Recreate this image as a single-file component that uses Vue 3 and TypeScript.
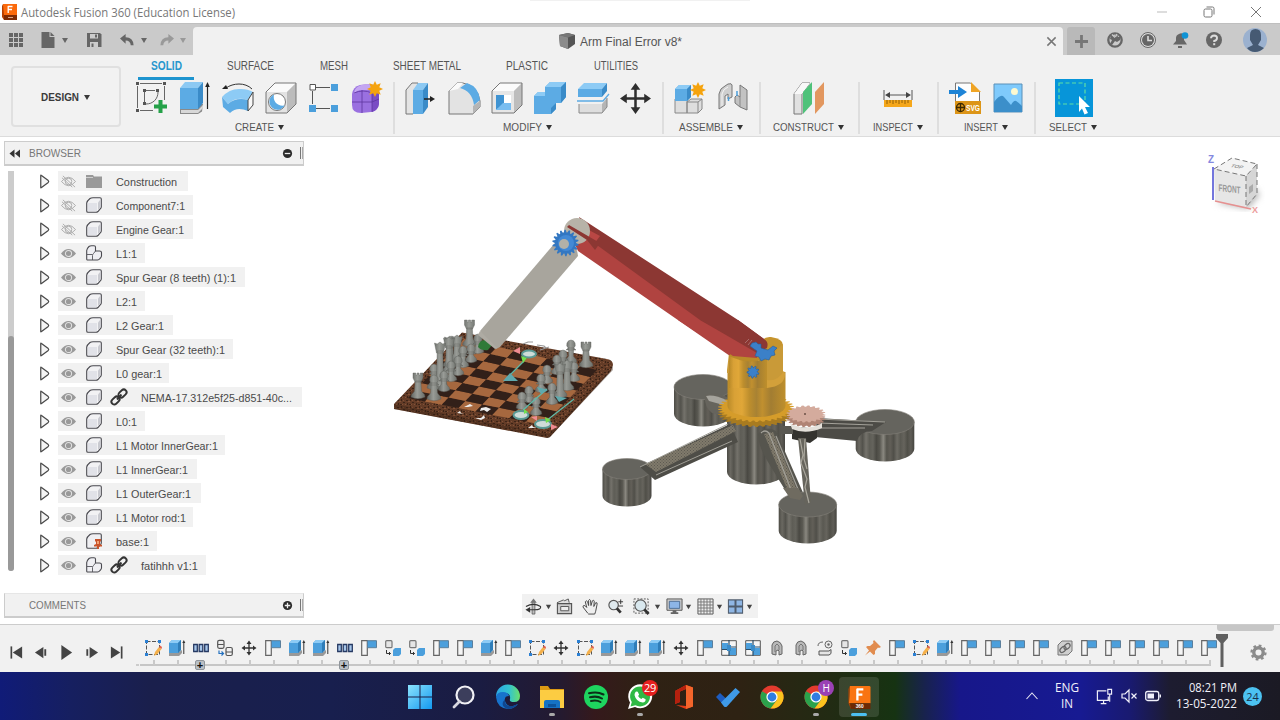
<script setup lang="ts">
import { h } from 'vue'

interface TxtProps { t: string; w: number; s?: number; b?: boolean; f?: string }
const Txt = (p: TxtProps) => {
  const s = Number(p.s ?? 12)
  return h('svg', { width: p.w, height: Math.round(s * 1.4), style: { overflow: 'visible', flex: 'none', display: 'block' } }, [
    h('text', {
      x: 0, y: s * 1.06, textLength: p.w, lengthAdjust: 'spacingAndGlyphs', fill: 'currentColor',
      'font-size': s, 'font-weight': p.b ? 700 : 400, 'font-family': p.f ?? '"Liberation Sans", Arial, sans-serif'
    }, p.t)
  ])
}
Txt.props = { t: String, w: Number, s: Number, b: Boolean, f: String }

const box = (x: number, y: number, w: number, d: number, hh: number, front: string, top: string, side: string, stroke: string) =>
  `<path d="M${x} ${y + d}l${d} ${-d}h${w}v${hh}l${-d} ${d}h${-w}z" fill="${front}"/><path d="M${x} ${y + d}l${d} ${-d}h${w}l${-d} ${d}z" fill="${top}"/><path d="M${x + w} ${y + d}l${d} ${-d}v${hh}l${-d} ${d}z" fill="${side}"/><path d="M${x} ${y + d}l${d} ${-d}h${w}v${hh}l${-d} ${d}h${-w}z" fill="none" stroke="${stroke}" stroke-width="1"/>`
const star = (cx: number, cy: number, r: number) => {
  let d = ''
  for (let i = 0; i < 16; i++) {
    const q = i % 2 ? r * 0.58 : r
    const a = (i * Math.PI) / 8 - Math.PI / 2
    d += `${i ? 'L' : 'M'}${(cx + q * Math.cos(a)).toFixed(1)} ${(cy + q * Math.sin(a)).toFixed(1)}`
  }
  return `<path d="${d}z" fill="#f5a30d"/>`
}
const chrome = '<circle cx="12" cy="12" r="11.5" fill="#e33b2e"/><path d="M12 12L2 6.2A11.5 11.5 0 0 0 10.6 23.4L17 15z" fill="#2ba24c"/><path d="M12 6.4h10a11.5 11.5 0 0 1-11.4 17L17 15z" fill="#fcc31e"/><circle cx="12" cy="12" r="5.6" fill="#fff"/><circle cx="12" cy="12" r="4.4" fill="#2f7de1"/>'

const icons: Record<string, [number, string]> = {
  sketch: [32, '<g fill="none" stroke="#666" stroke-width="1"><path d="M4 1.5h22M1.500 4v22M28.500 4v14M4 28.500h13M9 8.500h10M8.500 10v11M22 10c0 7-5 12-12 12"/></g><g fill="#555"><path d="M0 0h3v3H0zM27 0h3v3h-3zM0 27h3v3H0zM7 7h3v3H7zM20 7h3v3h-3zM7 20h3v3H7z"/></g><path d="M22.500 18h4v4.500H31v4h-4.500V31h-4v-4.500H18v-4h4.500z" fill="#24a148"/>'],
  extrude: [32, '<path d="M1 27l5-5h18l-1 7.500-4 2.500H1z" fill="#8a8a8a"/><path d="M2 28h17l5-5v3l-5 5H2z" fill="#d8d8d8"/><path d="M1 6l5-6h18l-5 6z" fill="#8cc9f3"/><path d="M1 6h18v21H1z" fill="#5cabe4"/><path d="M19 6l5-6v21l-5 6z" fill="#3a8bc8"/><path d="M28.500 27V3" stroke="#222" stroke-width="1.200"/><path d="M28.500 0l2.300 5h-4.600z" fill="#222"/>'],
  revolve: [32, '<path d="M4 6C11 1 23 0 30 7" fill="none" stroke="#333" stroke-width="1"/><path d="M0 7l4-4 2 4z" fill="#222"/><path d="M0 15Q8 6 19 7q7 0 12 3l-5 8Q14 14 6 22z" fill="#8dcbf5"/><path d="M0 15l6 7Q14 15 26 18v11Q15 24 8 31L1 25z" fill="#5cabe4"/><path d="M26 18l5-8v13l-5 6z" fill="#f8f8f8" stroke="#444"/>'],
  hole: [32, box(1, 1, 21, 9, 21, '#e3e3e3', '#fafafa', '#bcbcbc', '#777') + '<circle cx="12" cy="20" r="8.500" fill="#fff" stroke="#777"/><path d="M9 12.500a8 8 0 1 0 10.500 11c-7 1-12-4-10.500-11z" fill="#5cabe4"/>'],
  rectpat: [32, '<path d="M8 5.500h14M4.500 9v13M8 26.500h14" stroke="#555" fill="none"/><path d="M2 2.500h5.500V8H2z" fill="#fff" stroke="#555"/><path d="M23 2h7v7h-7zM1 23h7v7H1zM23 23h7v7h-7z" fill="#4b9fdc"/>'],
  form: [32, '<path d="M1 12Q2 5 9 3l9-1q9 1 10 7v13q-1 7-8 8l-10 1Q1 31 1 23z" fill="#9a70e0"/><path d="M3 12Q5 8 12 8h8l7-3q-4-3-11-3Q3 3 3 12z" fill="#c4a6f2"/><path d="M21 10l7-3v15q-1 6-7 8z" fill="#7a4cc4"/><path d="M11 8v23M1 20h20l7-3M21 8v22M3 11q9-4 18 0" stroke="#5e359f" stroke-width=".8" fill="none"/>' + star(24, 7, 8)],
  presspull: [32, '<path d="M1 8l6-7h6v24l-5 7H1z" fill="#e4e4e4" stroke="#777"/><path d="M8 8l5-7h10l-5 7z" fill="#8cc9f3"/><path d="M8 8h10v24H8z" fill="#5cabe4"/><path d="M18 8l5-7v24l-5 7z" fill="#3a8bc8"/><path d="M19 17h7" stroke="#222" stroke-width="1.500"/><path d="M30 17l-5-3v6z" fill="#222"/>'],
  fillet: [32, '<path d="M1 9l8-8h6q15 3 17 18v6l-7 7H1z" fill="#e3e3e3" stroke="#777"/><path d="M1 9l8-8h6l-5 6z" fill="#fafafa"/><path d="M25 24l7-5v6l-7 7z" fill="#b5b5b5"/><path d="M12 6l7-5q12 4 13 17l-6 5Q24 9 12 6z" fill="#5cabe4"/>'],
  shell: [32, box(1, 1, 22, 8, 22, '#e6e6e6', '#fbfbfb', '#bdbdbd', '#777') + '<path d="M5 13h15v15H5z" fill="#fff"/><path d="M5 13h8v9l-8 6z" fill="#3f93d2"/><path d="M5 28l7-7h8v7z" fill="#79bdf0"/>'],
  combine: [32, '<path d="M0 14l4-4h7V5l5-5h16v15l-5 6h-5v6l-5 5H0z" fill="#5cabe4"/><path d="M0 14l4-4h7v4zM11 5l5-5h16l-5 5z" fill="#8dcbf5"/><path d="M27 5l5-5v15l-5 6zM17 26v6l5-5v-6z" fill="#3a8bc8"/>'],
  split: [32, '<path d="M1 7l6-6h23l-5 6z" fill="#8dcbf5"/><path d="M1 7h24v8H1z" fill="#5cabe4"/><path d="M25 7l5-6v8l-5 6z" fill="#3a8bc8"/><path d="M0 19h26l6-7" stroke="#5cabe4" stroke-width="1.300" fill="none"/><path d="M2 22h23v9H2z" fill="#dedede"/><path d="M25 22l5-6v9l-5 6z" fill="#b5b5b5"/><path d="M2 22v9h23l5-6v-9" fill="none" stroke="#888"/>'],
  move: [32, '<path d="M16 4v24M4 16h24" stroke="#2e2e2e" stroke-width="2.600"/><path d="M16 0l5 7H11zM16 32l5-7H11zM0 16l7-5v10zM32 16l-7-5v10z" fill="#2e2e2e"/>'],
  newcomp: [32, '<path d="M1 17h12v14H1zM13 20l4-3h11v10l-4 4H13z" fill="#dedede" stroke="#888"/><path d="M13 20h11l4-3M24 20v11" stroke="#888" fill="none"/><path d="M1 7l4-4h12v12l-4 4H1z" fill="#5cabe4"/><path d="M1 7l4-4h12l-4 4z" fill="#8dcbf5"/><path d="M13 7l4-4v12l-4 4z" fill="#3a8bc8"/>' + star(24, 8, 8)],
  joint: [32, '<path d="M2 12q1-6 6-8l3-2q4-1 4 1v12l-4 2v-5l-3 2v9l-6 4z" fill="#cfcfcf" stroke="#777"/><path d="M5 24V12q1-5 6-7" fill="none" stroke="#f5f5f5"/><path d="M18 15l2-2 3 2V3l7 5v20l-7-3-5-4z" fill="#c2c2c2" stroke="#777"/><path d="M23 15v10" stroke="#888"/><path d="M11.500 15v4M20 9v5" stroke="#4b9fdc" stroke-width="1.500"/>'],
  construct: [32, '<path d="M1 12l8-11h8L9 12v20H1z" fill="#e1e1e1" stroke="#777"/><path d="M1 12l8-11h8L9 12z" fill="#f8f8f8"/><path d="M10 10l9-10v22l-9 10z" fill="#4fc27a"/><path d="M22 10l9-10v22l-9 10z" fill="#e2975f"/>'],
  inspect: [32, '<path d="M2 8v10M30 8v10M5 13h22" stroke="#555"/><path d="M3 13l5-3v6zM29 13l-5-3v6z" fill="#444"/><path d="M2 18h28v7H2z" fill="#f5a71b"/><path d="M5 18v4M8 18v3M11 18v4M14 18v3M17 18v4M20 18v3M23 18v4M26 18v3" stroke="#7a4f00" stroke-width=".8"/>'],
  svgin: [32, '<path d="M6.500 1h15l9 9v20h-24z" fill="#fdfdfd" stroke="#777"/><path d="M22 0v10h10z" fill="#efa424"/><path d="M6 19h26v13H6z" fill="#dc9518"/><path d="M0 8h9V4l9 6-9 6v-4H0z" fill="#1c83d6"/><circle cx="11.500" cy="25.500" r="4" fill="none" stroke="#3b2800" stroke-width="1.300"/><path d="M8 25.500h7M11.500 22v7" stroke="#3b2800" stroke-width="1.300"/><text x="17" y="29" font-family="Liberation Sans" font-weight="700" font-size="8.500" textLength="14" lengthAdjust="spacingAndGlyphs" fill="#fff">SVG</text>'],
  picture: [32, '<path d="M2 2h28v28H2z" fill="#7fcafc" stroke="#5b90b8"/><circle cx="22.500" cy="9.500" r="3.500" fill="#fdf9d0"/><path d="M2 20q7-9 10-5l7 8q3-5 5-4t6 5v6H2z" fill="#3c8fca"/>'],
  select: [38, '<path d="M0 0h38v38H0z" fill="#0795d9"/><path d="M4 4h26v21H4z" fill="none" stroke="#5fe0a5" stroke-width="1.200" stroke-dasharray="4 2.500"/><path d="M24 17l11 11h-5l3 6-3.500 1.500-2.500-6-3 3.500z" fill="#fff"/>'],

  grid: [16, '<path d="M1 1h4v4H1zM6 1h4v4H6zM11 1h4v4h-4zM1 6h4v4H1zM6 6h4v4H6zM11 6h4v4h-4zM1 11h4v4H1zM6 11h4v4H6zM11 11h4v4h-4z" fill="#666"/>'],
  file: [16, '<path d="M1.500 0h8v5h5v11h-13zM10.500 0l4 4h-4z" fill="#666"/>'],
  save: [16, '<path d="M1 1h13l1.500 1.500V15H1z" fill="#666"/><path d="M4 2h8v4.500H4zM4 10h8v5H4z" fill="#ccc"/><path d="M9 2.500h2v3H9zM5.500 11.500h2V15h-2z" fill="#666"/>'],
  undo: [16, '<path d="M6 2v3.500q8 0 8.500 8.500h-3Q11 9 6 9v3.500L0 7z" fill="#666"/>'],
  redo: [16, '<path d="M10 2v3.500Q2 5.500 1.500 14h3Q5 9 10 9v3.500L16 7z" fill="#999"/>'],
  caret: [8, '<path d="M1 2h6L4 7z" fill="currentColor"/>'],
  cube: [16, '<path d="M0 2l9-2 7 2v9l-7 5-8-3z" fill="#555"/><path d="M0 2l9-2 7 2-7 2.500z" fill="#777"/><path d="M0 2l9 2.500V16l-8-3z" fill="#8b8b8b"/>'],
  close: [12, '<path d="M1.500 1.500l9 9M10.500 1.500l-9 9" stroke="#777" stroke-width="1.600"/>'],
  plus: [14, '<path d="M5.500 0h3v5.500H14v3H8.500V14h-3V8.500H0v-3h5.500z" fill="#777"/>'],
  ext: [16, '<circle cx="8" cy="8" r="6.700" fill="none" stroke="#666" stroke-width="2.300"/><path d="M4 3l4 1 2-2 1 3 3-1-1 4-3 2-2-1-3 4-2-1 2-4-2-1z" fill="#666"/><path d="M5 2.500l3 3M10 2l-1.500 3" stroke="#ccc" stroke-width="1.200"/>'],
  clock: [16, '<circle cx="8" cy="8" r="7.500" fill="#ddd" stroke="#666"/><circle cx="8" cy="8" r="6" fill="#666"/><path d="M8 4v4.500h4" stroke="#ddd" stroke-width="1.600" fill="none"/>'],
  bell: [16, '<path d="M6 2q3-2 5 1v5l3 4.500H0L3 9V6q0-3 3-4zM5 14h4v2H5z" fill="#666"/><circle cx="12" cy="3.500" r="3.300" fill="#0f93d5"/>'],
  help: [16, '<circle cx="8" cy="8" r="8" fill="#666"/><path d="M5 6.200Q5.200 3.500 8.200 3.500 11 3.600 11 6T8.200 9v1" fill="none" stroke="#ddd" stroke-width="1.900"/><path d="M7.200 11.200h2v2h-2z" fill="#ddd"/>'],
  user: [24, '<circle cx="12" cy="12" r="12" fill="#9bb1cf"/><path d="M7 7q0-6 5.500-6T18 7v5l-3 5 6 3q-4 4-9 4t-8-4l6-3-3-5z" fill="#465a73"/>'],
  fusion: [16, '<path d="M1 0h14v11H1z" fill="#fb6a0c"/><path d="M1 0L0 2v11l2 3V11z" fill="#b53f02"/><path d="M2 11h13v5H2z" fill="#7d2b05"/><path d="M6 2.500h4.500M6 5.500h4M6.200 2v7" stroke="#fff" stroke-width="1.300"/><path d="M6 13.500h5" stroke="#d9a58a"/>'],
  minw: [12, '<path d="M1 6h10" stroke="#bbb"/>'],
  restore: [12, '<rect x="1" y="3" width="8" height="8" rx="1.500" fill="none" stroke="#777"/><path d="M3.500 1h6q1.500 0 1.500 1.500v6" fill="none" stroke="#777"/>'],
  xw: [12, '<path d="M1 1l10 10M11 1L1 11" stroke="#777"/>'],

  tri: [16, '<path d="M4 1.500Q4 .800 4.800 1.500L12 7q1 1 0 2l-7.200 5.500Q4 15.200 4 14.500z" fill="#f4f4f4" stroke="#4a4a4a" stroke-width="1.300"/>'],
  eye: [16, '<path d="M0 8Q8-1.500 16 8 8 17.500 0 8z" fill="#999"/><circle cx="8" cy="8" r="3.300" fill="none" stroke="#e2e2e2" stroke-width="1.100"/>'],
  eyeoff: [16, '<path d="M.500 8Q8-1 15.500 8 8 17 .500 8z" fill="none" stroke="#aaa"/><circle cx="8" cy="8" r="3.500" fill="none" stroke="#aaa"/><path d="M2 2l13 12M1 4l11 10" stroke="#aaa"/>'],
  folder: [16, '<path d="M0 2h7l1 1.500h8V15H0z" fill="#999"/><path d="M0 4.500h7" stroke="#ddd" stroke-width=".8"/>'],
  comp: [16, '<path d="M.700 6Q1 4 4 1.500 5 .700 7 .700h7q1.300 0 1.300 1.300v8q0 1-1.300 2.200L12 14.500q-1 .800-2 .800H2Q.700 15.300.700 14z" fill="#f2f2f4" stroke="#4a4a50" stroke-width="1.100"/><path d="M2 6h9v8H2z" fill="#e1e2e8"/><path d="M12 5.500l2.500-3V10L12 13z" fill="#c9cad0"/>'],
  asm: [16, '<path d="M.700 5.500Q1 3.500 3 1.500 4 .700 5.500.700H8q1.500 0 1.500 1.300v4h4q2 0 2 1.500V11q0 1-1.500 2.500-1 1.500-2.500 1.500H2Q.700 15.300.700 14z" fill="#efeff3" stroke="#4a4a50" stroke-width="1.100"/><path d="M6.500 15v-4.500q0-1 1-2L9.500 6M1 9.500h5.500" fill="none" stroke="#55555b" stroke-width=".9"/>'],
  pinned: [16, '<path d="M.700 6Q1 4 4 1.500 5 .700 7 .700h7q1.300 0 1.300 1.300v8q0 1-1.300 2.200L12 14.500q-1 .800-2 .800H2Q.700 15.300.700 14z" fill="#efeff2" stroke="#4a4a50" stroke-width="1.100"/><path d="M9 6h6v2l-1 1v2l2 1v1.500h-8V12l2-1V9L9 8zM11 13h2v3h-2z" fill="#c9542b"/><path d="M11 8h2v3h-2z" fill="#f2a376"/>'],
  link: [16, '<g fill="none" stroke="#333" stroke-width="1.900"><rect x="7" y="1.700" width="9" height="5.600" rx="2.800" transform="rotate(-43 11.500 4.500)"/><rect x="0" y="8.700" width="9" height="5.600" rx="2.800" transform="rotate(-43 4.500 11.500)"/><path d="M6 10.500l4.500-5"/></g>'],
  rew: [12, '<path d="M6 1.500v9L.500 6zM12 1.500v9L6.500 6z" fill="#333"/>'],
  minus: [12, '<circle cx="6" cy="6" r="5" fill="#2b2b2b"/><path d="M3 6h6" stroke="#eee" stroke-width="1.400"/>'],
  add: [12, '<circle cx="6" cy="6" r="5" fill="#2b2b2b"/><path d="M3 6h6M6 3v6" stroke="#eee" stroke-width="1.400"/>'],

  orbit: [18, '<path d="M7.500 4h3v13h-3z" fill="#bbb" stroke="#555" stroke-width=".8"/><path d="M5.500 5L9 .500 12.500 5z" fill="#777"/><path d="M1 9q8-4.500 15.500 0 1 3.500-6.500 3.500H4" fill="none" stroke="#333" stroke-width="1.200"/><path d="M.500 12.500l5-3v6z" fill="#333"/>'],
  lookat: [18, '<path d="M1 5l7-3 1 1 4-2 1 4" fill="#ddd" stroke="#555"/><path d="M1.500 6h15v10.500h-15z" fill="#ccc" stroke="#555" stroke-width="1.200"/><path d="M5 9h8.500v4.500H5z" fill="#eee" stroke="#555"/>'],
  hand: [18, '<path d="M6 16L1 9.500q0-2 2-1.500l2 2L3.500 4q1-2 2.500 0l1 4L7 2.500q1-2 2 0L9.500 8l1.500-5q1.500-1.500 2 .500L12.500 9l2-4q2-.500 1.500 1.500L14.500 14l-1 3H7z" fill="#eee" stroke="#444" stroke-width="1"/>'],
  zoom: [18, '<circle cx="7" cy="7.500" r="5" fill="#dfe9ee" stroke="#555" stroke-width="1.200"/><path d="M10.500 11l4 4.500" stroke="#333" stroke-width="3"/><path d="M12 4h5M14.500 1.500v5M12 8.500h5" stroke="#333"/>'],
  zoomwin: [18, '<path d="M1 1h15v15H1z" fill="none" stroke="#555" stroke-dasharray="2 1.500"/><circle cx="8" cy="8" r="6" fill="#d9e8ee" stroke="#555" stroke-width="1.200"/><path d="M12 12l4.500 5" stroke="#333" stroke-width="3"/>'],
  monitor: [18, '<path d="M1 1h16v12H1z" fill="#ccc" stroke="#555"/><path d="M3.500 3.500h11V11h-11z" fill="#8db5e6" stroke="#4b6c93"/><path d="M7 13h4v2h2v2H5v-2h2z" fill="#666"/>'],
  mesh: [18, '<path d="M1 1h16v16H1z" fill="#eee" stroke="#555"/><path d="M4.200 1v16M7.400 1v16M10.600 1v16M13.800 1v16M1 4.200h16M1 7.400h16M1 10.600h16M1 13.800h16" stroke="#777" stroke-width="1"/>'],
  views: [18, '<path d="M1.500 2h7v6.500h-7zM9.500 2h7v6.500h-7zM1.500 9.500h7V16h-7zM9.500 9.500h7V16h-7z" fill="#8fb6e4" stroke="#4f5c6d" stroke-width="1.100"/>'],

  tsketch: [16, '<path d="M1.500 1.500h13v13h-13z" fill="none" stroke="#555" stroke-dasharray="4 1.500"/><path d="M0 0h3v3H0zM13 0h3v3h-3zM0 13h3v3H0z" fill="#2b80d4"/><path d="M9 16l1-4 4-5 2.500 2-4 5z" fill="#f5b04a"/><path d="M14 7l1-1.500 2 1.500-.500 2z" fill="#e4604c"/>'],
  textrude: [16, '<path d="M0 12h10l3-2v3l-3 3H0z" fill="#999"/><path d="M0 3l3-3h9v10l-3 3H0z" fill="#4b9fdc"/><path d="M0 3l3-3h9L9 3z" fill="#8dcbf5"/><path d="M9 3l3-3v10l-3 3z" fill="#2f7db8"/><path d="M14.800 14V2" stroke="#333"/><path d="M14.800 0l1.500 3h-3z" fill="#333"/>'],
  tpat: [16, '<path d="M.700 4.500h3.600v7H.700zM6.200 4.500h3.600v7H6.200zM11.700 4.500h3.600v7h-3.600z" fill="#a6c6ea" stroke="#273a63" stroke-width="1.300"/>'],
  tcopy: [16, '<rect x=".7" y=".3" width="6.300" height="8" rx="1.500" fill="#eee" stroke="#555" stroke-width="1.200"/><path d="M.700 4.500h6M9 12h6" stroke="#555"/><rect x="9" y="7.500" width="6.300" height="8" rx="1.500" fill="none" stroke="#555" stroke-width="1.200"/><path d="M2 10.500v3h4M4.500 11.500l2 2-2 2" stroke="#2572c0" fill="none" stroke-width="1.200"/>'],
  tmove: [16, '<path d="M8 2v12M2 8h12" stroke="#333" stroke-width="1.300"/><path d="M8 .500l2.500 3.500h-5zM8 15.500l2.500-3.500h-5zM.500 8L4 5.500v5zM15.500 8L12 5.500v5z" fill="#333"/>'],
  tflag: [16, '<path d="M.700.700h5.600v14.600H.700z" fill="#f5f5f5" stroke="#666" stroke-width="1.200"/><path d="M6.500.700h9v7h-9z" fill="#4b9fdc" stroke="#5b7f9c" stroke-width="1"/>'],
  tcomp: [16, '<rect x=".7" y=".7" width="6.300" height="7" rx="1" fill="#e5e5e5" stroke="#777" stroke-width="1.200"/><path d="M8 10l2-2h6v6l-2 2H8z" fill="#4b9fdc"/><path d="M1.500 10v3.500h4M4 12l1.500 1.500L4 15" fill="none" stroke="#333"/>'],
  tquad: [16, '<path d="M.700.700h14.600v14.600H.700z" fill="#f5f5f5" stroke="#555"/><path d="M1 3h6v6H1zM8 8h7v7H8z" fill="#4b9fdc"/><path d="M8 0v16M1 9.500h7M8 7h7" stroke="#2c4f6b" stroke-width="1.200"/><path d="M6 5h4v6H6z" fill="#3a8bc8"/>'],
  tjoint: [16, '<path d="M3 14V5q1-4 5-4 4 1 5 5v8l-3 1v-4l-1-1-2 1v4z" fill="#b9b9b9" stroke="#666"/><path d="M6 12V6l2-2 2 2v4" fill="none" stroke="#777"/>'],
  tcyl: [16, '<circle cx="11.500" cy="4.500" r="3.500" fill="#eee" stroke="#666"/><circle cx="11.500" cy="4.500" r="1.200" fill="#666"/><path d="M1 6q0-4 5-4" fill="none" stroke="#666"/><path d="M2 11h10l2-1.500v4L12 15H2z" fill="#e5e5e5" stroke="#555"/>'],
  tpin: [16, '<path d="M9 0l7 7-2 1-1-.500L10 11v3l-1.500 1L5 11.500l-5 4 4-5L1 7l1.500-1H5l3.500-3L8 1.500z" fill="#e18c4f"/>'],
  tlink: [16, '<path d="M1 5l4-4h10v10l-4 4H1z" fill="#cfcfcf" stroke="#777"/><ellipse cx="6" cy="9.500" rx="3.500" ry="2.300" transform="rotate(-40 6 9.500)" fill="none" stroke="#666" stroke-width="1.200"/><ellipse cx="10" cy="6.500" rx="3.500" ry="2.300" transform="rotate(-40 10 6.500)" fill="none" stroke="#666" stroke-width="1.200"/>'],
  first: [16, '<path d="M2.500 1.500v13" stroke="#444" stroke-width="1.800"/><path d="M14 1.500v13L4 8z" fill="#444"/>'],
  back: [16, '<path d="M10 2v12L1 8z" fill="#444"/><path d="M12 4.500v7" stroke="#444" stroke-width="2"/>'],
  play: [16, '<path d="M2.500 0v16L14 8z" fill="#444"/>'],
  fwd: [16, '<path d="M6 2v12l9-6z" fill="#444"/><path d="M3.500 4.500v7" stroke="#444" stroke-width="2"/>'],
  last: [16, '<path d="M13.500 1.500v13" stroke="#444" stroke-width="1.800"/><path d="M2 1.500v13L12 8z" fill="#444"/>'],
  gear: [18, '<circle cx="9" cy="9" r="5" fill="none" stroke="#8b8b8b" stroke-width="3.600"/><circle cx="9" cy="9" r="7.400" fill="none" stroke="#8b8b8b" stroke-width="2.400" stroke-dasharray="2.900 2.900"/>'],

  win: [24, '<linearGradient id="wg" x1="0" y1="0" x2="1" y2="1"><stop offset="0" stop-color="#8be3fd"/><stop offset="1" stop-color="#1399f0"/></linearGradient><path d="M0 0h11.500v11.500H0zM12.500 0H24v11.500H12.500zM0 12.500h11.500V24H0zM12.500 12.500H24V24H12.500z" fill="url(#wg)"/>'],
  search: [24, '<circle cx="13" cy="10" r="8.500" fill="#3c3e5c" stroke="#f1f1f6" stroke-width="2.200"/><path d="M7.500 16.500L2 22" stroke="#d8d8e0" stroke-width="2.800" stroke-linecap="round"/>'],
  edge: [24, '<linearGradient id="eg" x1="0" y1=".3" x2="1" y2=".3"><stop offset="0" stop-color="#2ba6e4"/><stop offset=".55" stop-color="#33c3cf"/><stop offset="1" stop-color="#6be06b"/></linearGradient><path d="M0 12a12 12 0 0 1 24-1q0 6-6 6-5 0-4-3 1-6-6-6Q2 8 0 12z" fill="url(#eg)"/><path d="M0 12q1-5 7-5 5 0 6 4-5 0-4 5 2 6 8 5l5-2q-4 5-10 5Q1 23 0 12z" fill="#1773cc"/><path d="M9 14q-1 8 8 7l5-2q-4 5-10 5-9-3-3-10z" fill="#10478f"/>'],
  explorer: [24, '<path d="M0 1h8l2 3h14v5H0z" fill="#dc9a13"/><path d="M0 5h24v18H0z" fill="#fccc42"/><path d="M4 23v-6q0-2 2-2h12q2 0 2 2v6z" fill="#1572c4"/><path d="M8 19h8v3H8z" fill="#0c539c"/>'],
  spotify: [24, '<circle cx="12" cy="12" r="12" fill="#1ed45f"/><path d="M5 8.300q8-2.300 14.500 1.200M6 12.300q7-1.800 12 1.200M7 16q5.500-1.300 9.500 1" fill="none" stroke="#0c2f18" stroke-width="2" stroke-linecap="round"/>'],
  whatsapp: [24, '<path d="M0 24l2-6.500A12 12 0 1 1 7 22z" fill="#fff"/><path d="M2.500 21.500l1.300-4.400a10 10 0 1 1 3.600 3.200z" fill="#2fb944"/><path d="M8 6.500l1.800.2 1.300 3-1 1.300q1 2 3.200 3l1.500-1.200 2.800 1.500q.3 3-3 3.300Q8 16.500 6.500 10 6.500 7.500 8 6.500z" fill="#fff"/>'],
  office: [24, '<path d="M3 6l11-6 7 2.500v19L14 24 4 20l10 1V4L8 6.500V17l-5 2z" fill="#e03c17"/><path d="M14 0l7 2.500v19L14 24z" fill="#f3652b"/><path d="M3 6l11-6v4L8 6.500V17l-5 2z" fill="#b5200e"/>'],
  todo: [24, '<path d="M0 12l4-4 7 6.500-4 5z" fill="#1d5cc0"/><path d="M5 17.500L19.500 3 24 7 11 21.500q-1.500 1-3 0z" fill="#3f9ae8"/>'],
  chrome: [24, chrome],
  chromeh: [24, chrome],
  fusionbig: [24, '<path d="M2 0h20q1.500 0 1.500 1.500V18H1z" fill="#f97412"/><path d="M2 0L.500 3v15L3 24V18H1z" fill="#b04303"/><path d="M2 18h21.500v6H3z" fill="#6d2904"/><path d="M9 3.500h7M9 9h6M9.800 3v12" stroke="#fff" stroke-width="2.400"/><text x="8" y="22.800" font-size="5" font-weight="700" font-family="Liberation Sans" fill="#fff">360</text>'],
  chev: [12, '<path d="M.500 9L6 3l5.500 6" fill="none" stroke="#e8e8f4" stroke-width="1.100"/>'],
  net: [18, '<path d="M11 3H1.500v10H13V9M5 16.500h6M8 13v3" fill="none" stroke="#f0f0fa" stroke-width="1.300"/><path d="M12.500 1.500h4v5h-4zM14.500 6.500v8" fill="none" stroke="#f0f0fa" stroke-width="1.200"/>'],
  mute: [16, '<path d="M1 6h3l4-4v12l-4-4H1z" fill="none" stroke="#f0f0fa" stroke-width="1.200"/><path d="M10.500 5.500l5 5M15.500 5.500l-5 5" stroke="#f0f0fa" stroke-width="1.200"/>'],
  batt: [16, '<rect x=".7" y="3.500" width="13" height="9" rx="2" fill="none" stroke="#f0f0fa" stroke-width="1.300"/><path d="M2.500 5.500h6.500v5H2.500zM14.500 6.500H16v3h-1.500z" fill="#f0f0fa"/>']
}
const Ic = (p: { n: string; s: number }) => {
  const [vb, m] = icons[p.n]
  return h('svg', { width: p.s, height: p.s, viewBox: `0 0 ${vb} ${vb}`, innerHTML: m, style: { flex: 'none', display: 'block', overflow: 'visible' } })
}
Ic.props = { n: String, s: Number }

const tabs = [
  { t: 'SOLID', w: 31 }, { t: 'SURFACE', w: 47 }, { t: 'MESH', w: 28 },
  { t: 'SHEET METAL', w: 68 }, { t: 'PLASTIC', w: 42 }, { t: 'UTILITIES', w: 44 }
]
const groups = [
  { t: 'CREATE', w: 39, cls: 'g-create', ic: ['sketch', 'extrude', 'revolve', 'hole', 'rectpat', 'form'] },
  { t: 'MODIFY', w: 39, cls: 'g-modify', ic: ['presspull', 'fillet', 'shell', 'combine', 'split', 'move'] },
  { t: 'ASSEMBLE', w: 54, cls: 'g-assemble', ic: ['newcomp', 'joint'] },
  { t: 'CONSTRUCT', w: 61, cls: 'g-construct', ic: ['construct'] },
  { t: 'INSPECT', w: 40, cls: 'g-inspect', ic: ['inspect'] },
  { t: 'INSERT', w: 34, cls: 'g-insert', ic: ['svgin', 'picture'] },
  { t: 'SELECT', w: 38, cls: 'g-select', ic: ['select'] }
]
interface Row { t: string; w: number; pad: number; off?: boolean; ic?: string; link?: boolean }
const rows: Row[] = [
  { t: 'Construction', w: 61, pad: 11, off: true, ic: 'folder' },
  { t: 'Component7:1', w: 69, pad: 8, off: true },
  { t: 'Engine Gear:1', w: 68, pad: 9, off: true },
  { t: 'L1:1', w: 21, pad: 8, ic: 'asm' },
  { t: 'Spur Gear (8 teeth) (1):1', w: 120, pad: 9 },
  { t: 'L2:1', w: 21, pad: 8 },
  { t: 'L2 Gear:1', w: 48, pad: 9 },
  { t: 'Spur Gear (32 teeth):1', w: 109, pad: 8 },
  { t: 'L0 gear:1', w: 46, pad: 7 },
  { t: 'NEMA-17.312e5f25-d851-40c...', w: 151, pad: 10, link: true },
  { t: 'L0:1', w: 21, pad: 8 },
  { t: 'L1 Motor InnerGear:1', w: 102, pad: 7 },
  { t: 'L1 InnerGear:1', w: 72, pad: 9 },
  { t: 'L1 OuterGear:1', w: 75, pad: 10 },
  { t: 'L1 Motor rod:1', w: 70, pad: 7 },
  { t: 'base:1', w: 33, pad: 8, ic: 'pinned' },
  { t: 'fatihhh v1:1', w: 57, pad: 8, ic: 'asm', link: true }
]
const nav = [
  { n: 'orbit', c: true, k: 'n-a' }, { n: 'lookat', k: 'n-b' }, { n: 'hand', k: 'n-b' }, { n: 'zoom', k: 'n-b' },
  { n: 'zoomwin', c: true, k: 'n-c' }, { n: 'monitor', c: true, k: 'n-d' }, { n: 'mesh', c: true, k: 'n-d' }, { n: 'views', c: true, k: 'n-d' }
]
const seq = ('tsketch textrude tpat tcopy tmove tflag textrude textrude tpat tflag tcomp tcomp tflag tflag textrude tflag ' +
  'tsketch tmove tsketch textrude textrude textrude tmove tflag tquad tquad tjoint tjoint tcyl tcomp tpin tflag tsketch textrude ' +
  'tflag tflag tflag tflag tlink tflag tflag tflag tflag tflag tflag').split(' ')
const apps = [
  { n: 'win' }, { n: 'search' }, { n: 'edge' }, { n: 'explorer', run: true }, { n: 'spotify' }, { n: 'whatsapp', run: true, badge: '29' },
  { n: 'office' }, { n: 'todo' }, { n: 'chrome' }, { n: 'chromeh', run: true, badge: 'H' }, { n: 'fusionbig', active: true }
] as { n: string; run?: boolean; badge?: string; active?: boolean }[]

/* Geometry of the modelled scene */
const gear = (cx: number, cy: number, rx: number, ry: number, n: number, k: number) => {
  const pts: string[] = []
  for (let i = 0; i < n; i++) {
    for (const [o, q] of [[0, k], [0.28, 1], [0.55, 1], [0.8, k]]) {
      const a = ((i + o) / n) * Math.PI * 2
      pts.push(`${(cx + rx * q * Math.cos(a)).toFixed(1)},${(cy + ry * q * Math.sin(a)).toFixed(1)}`)
    }
  }
  return pts.join(' ')
}
const corner = { l: [408, 398], t: [464, 339], r: [597, 370], b: [543, 425] }
const at = (u: number, v: number) => {
  const f = (i: number) => (corner.l[i] * (1 - u) + corner.b[i] * u) * (1 - v) + (corner.t[i] * (1 - u) + corner.r[i] * u) * v
  return `${f(0).toFixed(1)},${f(1).toFixed(1)}`
}
const squares: { p: string; dark: boolean }[] = []
for (let i = 0; i < 8; i++) for (let j = 0; j < 8; j++) {
  squares.push({ p: [at(i / 8, j / 8), at((i + 1) / 8, j / 8), at((i + 1) / 8, (j + 1) / 8), at(i / 8, (j + 1) / 8)].join(' '), dark: (i + j) % 2 === 0 })
}
const piece = (x: number, y: number, hh: number, k: string) => {
  const b = hh > 22 ? 7 : 5.8
  const top = y - hh
  let d = `M${x - b} ${y}q0-3 2-4l1.500-2L${x - 2.8} ${top + 8}h5.600L${x + b - 3.5} ${y - 6}l1.500 2q2 1 2 4q${-b} 3.500 ${-2 * b} 0z`
  if (k === 'r') d += `M${x - 5} ${top}h2.800v2h1.200v-2h2v2h1.200v-2h2.800v5l-2 4h-6l-2-4z`
  else if (k === 'q') d += `M${x - 5.5} ${top}l2.700 1 2.800-2 2.800 2 2.700-1-2 10h-7z`
  else d += `M${x} ${top}a4.600 4.600 0 0 1 2.800 8l2.200 2h-10l2.200-2A4.600 4.600 0 0 1 ${x} ${top}z`
  return d
}
const leftSet: [number, number, number, string][] = [
  [469.5, 345, 25, 'r'], [478, 352, 18, 'p'], [450, 366, 29, 'q'], [457, 360, 24, 'q'], [463, 366, 20, 'p'], [471, 361, 17, 'p'],
  [449, 372, 34, 'q'], [458, 374, 18, 'p'], [434, 388, 24, 'p'], [440, 385, 42, 'q'], [451, 380, 19, 'p'], [444, 390, 19, 'p'], [418, 397, 24, 'r'], [434, 399, 24, 'p']
]
const rightSet: [number, number, number, string][] = [
  [571, 362, 22, 'p'], [586, 366, 24, 'r'], [563, 368, 18, 'p'], [557, 373, 18, 'p'], [574, 380, 18, 'p'], [547, 382, 17, 'p'],
  [567, 389, 28, 'q'], [541, 391, 17, 'p'], [560, 396, 32, 'q'], [552, 403, 20, 'p'], [529, 401, 15, 'p'], [522, 408, 16, 'p'], [536, 414, 17, 'p']
]
const feet = [
  { x: 703, y: 387, rx: 29, ry: 12.5, h: 27 },
  { x: 885, y: 422, rx: 29.3, ry: 12.5, h: 27 },
  { x: 627, y: 469, rx: 24.5, ry: 10.5, h: 27 }
]
const cyl = (f: { x: number; y: number; rx: number; ry: number; h: number }) =>
  `M${f.x - f.rx} ${f.y}v${f.h}a${f.rx} ${f.ry} 0 0 0 ${2 * f.rx} 0v${-f.h}z`
const foot4 = { x: 807.7, y: 504.5, rx: 29, ry: 12.5, h: 26.5 }
const shades = ['#4c4b45', '#6a6861', '#53524c', '#74726b', '#5e5d56', '#65645d', '#4a4943', '#5a5952', '#8a8880', '#55544d', '#625f58', '#504f49', '#6d6b64', '#5a5952', '#66645d', '#504f48', '#5f5d57', '#45443f']
</script>

<template>
  <div class="screen">
    <header class="titlebar">
      <Ic n="fusion" :s="16" />
      <Txt class="apptitle" t="Autodesk Fusion 360 (Education License)" :w="214" :s="12.5" f="'Open Sans', 'Noto Sans', sans-serif" />
      <div class="winbtns"><Ic n="minw" :s="12" /><Ic n="restore" :s="12" /><Ic n="xw" :s="12" /></div>
    </header>
    <div class="docbar">
      <div class="quick">
        <Ic n="grid" :s="16" />
        <div class="q q1"><Ic n="file" :s="16" /><Ic n="caret" :s="8" /></div>
        <Ic class="q2" n="save" :s="16" />
        <div class="q q3"><Ic n="undo" :s="15" /><Ic n="caret" :s="8" /></div>
        <div class="q q4"><Ic n="redo" :s="15" /><Ic class="lt" n="caret" :s="8" /></div>
      </div>
      <div class="doctab">
        <Ic n="cube" :s="16" /><Txt class="docname" t="Arm Final Error v8*" :w="102" :s="12.5" /><Ic class="docx" n="close" :s="11" />
      </div>
      <div class="newtab"><Ic n="plus" :s="13" /></div>
      <div class="status"><Ic n="ext" :s="16" /><Ic n="clock" :s="16" /><Ic n="bell" :s="16" /><Ic n="help" :s="16" /><Ic class="usr" n="user" :s="24" /></div>
    </div>
    <section class="ribbon">
      <button class="design"><Txt t="DESIGN" :w="38" :s="11.5" b /><Ic n="caret" :s="8" /></button>
      <div class="rbody">
        <nav class="tabs">
          <div v-for="(t, i) in tabs" :key="t.t" :class="['tab', 't' + i, { on: !i }]"><Txt :t="t.t" :w="t.w" :s="12" :b="!i" /></div>
        </nav>
        <div class="groups">
          <div v-for="g in groups" :key="g.t" :class="['group', g.cls]">
            <div class="gicons"><div v-for="i in g.ic" :key="i" class="cell"><Ic :n="i" :s="i === 'select' ? 38 : i === 'move' ? 31 : 32" /></div></div>
            <div class="glabel"><Txt :t="g.t" :w="g.w" :s="11.5" /><Ic n="caret" :s="8" /></div>
          </div>
        </div>
      </div>
    </section>
    <main class="work">
      <svg class="model" viewBox="380 200 560 360" width="560" height="360">
        <defs>
          <linearGradient id="metal"><stop v-for="(c, i) in shades" :key="i" :offset="i / 17" :stop-color="c" /></linearGradient>
          <linearGradient id="gold"><stop offset="0" stop-color="#b98a28" /><stop offset=".12" stop-color="#d9a136" /><stop offset=".25" stop-color="#e0a738" /><stop offset=".38" stop-color="#bd8e2d" /><stop offset=".5" stop-color="#a88233" /><stop offset=".6" stop-color="#c1902f" /><stop offset=".75" stop-color="#a27d32" /><stop offset="1" stop-color="#be8f2c" /></linearGradient>
          <linearGradient id="pc"><stop offset="0" stop-color="#626561" /><stop offset=".45" stop-color="#999c97" /><stop offset="1" stop-color="#6a6d68" /></linearGradient>
          <pattern id="grain" width="9" height="7" patternUnits="userSpaceOnUse"><path d="M0 0h9v7H0z" fill="#643c27" /><path d="M1 1h2v1H1zM5 0h1v2H5zM7 3h2v1H7zM2 4h1v2H2zM4 5h2v1H4z" fill="#3c2417" /><path d="M3 2h2v1H3zM0 5h1v1H0zM6 5h1v1H6zM7 1h1v1H7z" fill="#835237" /></pattern>
          <pattern id="knurl" width="3" height="3" patternUnits="userSpaceOnUse"><path d="M0 0h3v3H0z" fill="#807a6b" /><path d="M0 0h1v1H0zM1.500 1.500h1v1h-1z" fill="#5d5a52" /></pattern>
        </defs>
        <!-- chess board -->
        <path d="M394 404L462 332.500 607 359q6 1 6 6l-2 6-61 66-3 1L394 409z" fill="url(#grain)" />
        <path d="M394 404L549 434l62-65 2-3v4l-64 68L394 409z" fill="#351f14" opacity=".35" />
        <polygon v-for="(s, i) in squares" :key="i" :points="s.p" :fill="s.dark ? '#322019' : '#a6683f'" />
        <g fill="#eee"><path d="M464 407l6-3 3 2-5 1zM481 408l5-1 5 2-4 3-3-2-4 1zM457 413l3-2 1 2 3 1zM475 418l6 0 3-3 1 3-4 2zM528 428l4-3 1 2 4 1z" /></g>
        <g fill="none" stroke="#999" stroke-width="1.200"><path d="M523 344l5-2h5M537 345l7 1 2 2M540 350l9-3" /></g>
        <g fill="url(#pc)" stroke="#5b5e59" stroke-width=".4">
          <path v-for="(p, i) in leftSet" :key="i" :d="piece(...p)" />
          <path v-for="(p, i) in rightSet" :key="'r' + i" :d="piece(...p)" />
        </g>
        <g>
          <path d="M524 361L506 379M574 399l-28 22M547 389l-24 21" stroke="#5fb8a7" stroke-width="1.300" />
          <path d="M510 373l8 8-15 0zM537 387l11 3-7 4zM555 396l12 2-8 4z" fill="#5fa9ad" />
          <g fill="#cfdcd8" stroke="#5b9a95" stroke-width="2"><ellipse cx="529" cy="354" rx="7" ry="3.500" /><ellipse cx="521" cy="415" rx="7.500" ry="4" /><ellipse cx="543" cy="424" rx="8" ry="4" /></g>
          <path d="M521 356l6 2-4 5zM524 409l4 3-4 2zM545 417l6 3-5 3z" fill="#72e04f" />
          <path d="M513 351l7-4v7zM531 417l6-1v5zM551 424l7 3-7 3z" fill="#ef8c91" />
        </g>
        <path d="M478 347q1-7 7-7l7 5-4 5q-6 1-10-3z" fill="#2f7a38" />
        <!-- arm -->
        <path d="M579 217L738 320 764 339q5 3 3 9l-10 8-20-2-152-106-4-25z" fill="#8c3733" />
        <path d="M567 228l12 4 121 88 57 31v7l-27-2L578 251z" fill="#b04340" />
        <path d="M587 229l13 7-6 8-16-11z" fill="#b94744" />
        <circle cx="577" cy="231" r="13" fill="#b7b3a8" />
        <path d="M587 240l-20-13 2-2 31 18-5 7z" fill="#8c3733" />
        <path d="M554 244L480 331l3 5 13 13 4-2 78-91q-2-18-18-18z" fill="#a8a59d" />
        <path d="M480 331l-2 4 17 14 2-1z" fill="#aeaba3" />
        <polygon :points="gear(565.5, 243, 13.2, 13.2, 18, 0.8)" fill="#3377c2" />
        <circle cx="566" cy="243" r="8" fill="#4389d5" /><circle cx="564" cy="244" r="5" fill="#b4b1a8" />
        <!-- base -->
        <g v-for="(f, i) in feet" :key="i">
          <path :d="cyl(f)" fill="url(#metal)" /><ellipse :cx="f.x" :cy="f.y" :rx="f.rx" :ry="f.ry" fill="#65645e" stroke="#84827b" stroke-width=".6" />
        </g>
        <path d="M705 395q10-4 24 3v20l-17-5q-8-6-7-18z" fill="#66645d" /><path d="M706 396q8-2 22 5l-1 5-18-5z" fill="#a6a49d" />
        <path d="M727 415v57a29 12.500 0 0 0 58 0v-57z" fill="url(#metal)" />
        <path d="M640 467l90-43 8 18-83 38z" fill="#4e4d47" /><path d="M645 464l88-39 3 6-80 41z" fill="url(#knurl)" /><path d="M640 467l88-43M656 475l76-34" stroke="#a09e96" stroke-width="1" fill="none" />
        <path d="M758 434q7-9 18-3l28 64-14 3-22-36q-10-16-10-28z" fill="#56554e" /><path d="M764 434l9-2 26 63-9 1z" fill="url(#knurl)" /><path d="M761 433q4-4 8 0l24 62M776 436l24 58" stroke="#a3a199" stroke-width="1.200" fill="none" />
        <path d="M817 418l69 4-14 9q-12 0-15 10l-42-4z" fill="#4c4b46" /><path d="M818 423l55 2M820 428h45M817 419l68 3" stroke="#a3a199" stroke-width="1.200" />
        <path :d="cyl(foot4)" fill="url(#metal)" /><ellipse :cx="foot4.x" :cy="foot4.y" :rx="foot4.rx" :ry="foot4.ry" fill="#65645e" stroke="#84827b" stroke-width=".6" />
        <path d="M783 488l15 0 5 8-3 4-10-2z" fill="#6f6b60" />
        <path d="M792 429l7-2 18 2v9l-7 5-18-4z" fill="#34332f" /><path d="M781 426h12v8h-12z" fill="#5a5953" />
        <path d="M798 438l8 0 5 64-6 3z" fill="#66645c" /><path d="M800 439l3 16-2 8 6 16-2 8 4 16M805 439l-1 20 3 10" stroke="#aaa79d" stroke-width="1.200" fill="none" />
        <!-- turntable -->
        <polygon :points="gear(756, 413, 38, 14, 34, 0.9)" fill="#a87b20" /><polygon :points="gear(756, 408, 38, 14, 34, 0.9)" fill="#d59c2a" />
        <path d="M759 343q6-7 12-6 12 2 12 8v31h-24z" fill="#c6942d" />
        <path d="M727.500 372v34a29 11 0 0 0 58 0v-34z" fill="url(#gold)" />
        <path d="M729 355q18 9 38 4v29h-38z" fill="url(#gold)" /><path d="M729 353v20h-2v-3zM767 360l16-16v27l2 3q-2 11-18 13z" fill="#c99a38" />
        <path d="M767 380q10 2 17-9l1 3q0 12-18 14z" fill="#d3a03a" />
        <path d="M729 356l3-4 34 1 2 5q-18 8-39-2z" fill="#b98a29" />
        <path d="M678 320l22 0 57 31v7l-24-2z" fill="#b04340" /><path d="M700 320h38l26 19q5 3 3 9l-10 5z" fill="#8c3733" />
        <g fill="#3b80c8" stroke="#265c9a" stroke-width=".6"><path d="M750 346l2-3 4-1 2 2 3 0 0 4 3 1 4 1 5-4 4 2-3 3 1 4-4 1-2 4-4-1-4 2-2-4-4-1 2-5-3-2z" /><polygon :points="gear(753, 372, 6, 6.2, 9, 0.7)" /></g>
        <path d="M745 343l4-4M748 345l4-5" stroke="#b07a79" stroke-width=".8" />
        <path d="M790 423q16 9 32 0v5q-16 7-30 1z" fill="#e4e0da" />
        <polygon :points="gear(806, 418.5, 19.500, 8.500, 20, 0.86)" fill="#b08475" /><polygon :points="gear(806, 414, 19.500, 8.500, 20, 0.86)" fill="#d4ab9d" />
        <circle cx="805" cy="414" r="1" fill="#6b4f46" />
      </svg>
      <svg class="viewcube" viewBox="1195 145 75 75" width="75" height="75">
        <defs><filter id="sh"><feGaussianBlur stdDeviation="3" /></filter></defs>
        <path d="M1216 203l32 6 12-14-6-8z" fill="#bbb" filter="url(#sh)" />
        <path d="M1214 169l18-11 25 6-11 12z" fill="#f3f3f3" /><path d="M1214 169l32 7v31l-31-6z" fill="#e6e6e6" /><path d="M1246 176l11-12v30l-11 13z" fill="#d6d6d6" />
        <path d="M1214 169l18-11 25 6-11 12zM1246 176v31M1257 164v30l-11 13" fill="none" stroke="#777" stroke-width="1" stroke-dasharray="5 3" />
        <path d="M1213 167v33" stroke="#7376dd" stroke-width="2" /><path d="M1215 201l36 8" stroke="#e69090" stroke-width="1.500" />
        <g font-family="Liberation Sans, sans-serif" font-weight="700"><text x="1208" y="163" font-size="10" fill="#8589df" textLength="6" lengthAdjust="spacingAndGlyphs">Z</text><text x="1252" y="213" font-size="9" fill="#ec9c9c" textLength="6" lengthAdjust="spacingAndGlyphs">X</text>
          <text x="0" y="0" font-size="10" fill="#999" textLength="22" lengthAdjust="spacingAndGlyphs" transform="matrix(1 .12 0 1 1218.500 191)">FRONT</text>
          <text x="0" y="0" font-size="7" fill="#999" textLength="12" lengthAdjust="spacingAndGlyphs" transform="matrix(1 .16 -.5 .6 1230 167)">TOP</text></g>
        <path d="M1249 187l4-3v7l-4 3z" fill="#aaa" />
      </svg>
      <aside class="side">
        <div class="panel"><Ic n="rew" :s="11" /><Txt class="ptitle" t="BROWSER" :w="52" :s="11.5" /><Ic class="pbtn" n="minus" :s="11" /><i class="grip"></i></div>
        <div class="tree">
          <div class="track"><div class="thumb"></div></div>
          <ul>
            <li v-for="r in rows" :key="r.t">
              <Ic n="tri" :s="15" />
              <div class="pill">
                <Ic :n="r.off ? 'eyeoff' : 'eye'" :s="15" /><Ic class="ci" :n="r.ic ?? 'comp'" :s="16" />
                <Ic v-if="r.link" class="li" n="link" :s="16" />
                <Txt class="rt" :t="r.t" :w="r.w" :s="11" /><i :style="{ width: r.pad + 'px' }"></i>
              </div>
            </li>
          </ul>
        </div>
        <div class="panel comments"><Txt class="ptitle" t="COMMENTS" :w="57" :s="11.5" /><Ic class="pbtn" n="add" :s="11" /><i class="grip"></i></div>
      </aside>
      <div class="navbar"><div v-for="n in nav" :key="n.n" :class="['nv', n.k]"><Ic :n="n.n" :s="17" /><Ic v-if="n.c" n="caret" :s="7" /></div></div>
    </main>
    <section class="timeline">
      <div class="hthumb"></div>
      <div class="playback"><Ic v-for="p in ['first', 'back', 'play', 'fwd', 'last']" :key="p" :n="p" :s="15" /></div>
      <div class="dots"></div>
      <div class="steps">
        <div v-for="(s, i) in seq" :key="i" class="step"><Ic :n="s" :s="16" /><i class="tick"></i><b v-if="i === 2 || i === 8" class="exp">+</b></div>
      </div>
      <svg class="head" width="12" height="34"><path d="M0 0h12v4L7.500 9V33h-3V9L0 4z" fill="#606060" /></svg>
      <Ic class="cog" n="gear" :s="17" />
    </section>
    <footer class="taskbar">
      <div class="apps">
        <div v-for="a in apps" :key="a.n" :class="['app', { active: a.active }]">
          <Ic :n="a.n" :s="a.n === 'fusionbig' ? 23 : 24" />
          <span v-if="a.badge" :class="['badge', { h: a.badge === 'H' }]">{{ a.badge }}</span>
          <i v-if="a.run || a.active" class="run"></i>
        </div>
      </div>
      <div class="tray">
        <Ic n="chev" :s="12" />
        <div class="lang"><Txt t="ENG" :w="24" :s="12.5" f="'Open Sans', sans-serif" /><Txt t="IN" :w="12" :s="12.5" f="'Open Sans', sans-serif" /></div>
        <div class="sys"><Ic n="net" :s="17" /><Ic n="mute" :s="16" /><Ic n="batt" :s="16" /></div>
        <div class="clock"><Txt t="08:21 PM" :w="48" :s="12.5" f="'Open Sans', sans-serif" /><Txt t="13-05-2022" :w="61" :s="12.5" f="'Open Sans', sans-serif" /></div>
        <span class="count">24</span>
      </div>
    </footer>
  </div>
</template>

<style>
html, body { margin: 0; overflow: hidden; background: #fff; }
</style>
<style scoped>
* { box-sizing: border-box; }
.screen { width: 1280px; height: 720px; overflow: hidden; display: flex; flex-direction: column; font-family: "Liberation Sans", Arial, sans-serif; color: #444; background: #fff; }
.titlebar { height: 23px; flex: none; display: flex; align-items: center; padding-left: 2px; background: linear-gradient(#f1f1f1, #f1f1f1) 530px 0 / 220px 1px no-repeat #fff; }
.apptitle { margin-left: 3px; margin-top: 3px; color: #777; }
.winbtns { margin-left: auto; display: flex; gap: 35px; margin-right: 18px; }
.docbar { height: 32px; flex: none; background: #cacaca; display: flex; align-items: flex-end; border-top: 1px solid #bfbfbf; }
.quick { width: 193px; height: 31px; display: flex; align-items: center; padding-left: 8px; }
.q { display: flex; align-items: center; gap: 5px; color: #666; }
.q1 { margin-left: 16px; } .q2 { margin-left: 17px; } .q3 { margin-left: 18px; } .q4 { margin-left: 11px; }
.lt { color: #999; }
.doctab { width: 870px; height: 28px; background: #f1f1f1; border-radius: 4px 4px 0 0; display: flex; align-items: center; padding-left: 366px; }
.docname { margin-left: 5px; color: #555; margin-top: 1px; }
.docx { margin-left: 364px; }
.newtab { margin-left: 4px; width: 28px; height: 28px; background: #b9b9b9; border-radius: 3px 3px 0 0; display: grid; place-items: center; }
.status { display: flex; gap: 17px; margin-left: 12px; height: 31px; align-items: center; }
.usr { margin-left: 4px; }
.ribbon { height: 82px; flex: none; background: #f1f1f1; border-bottom: 1px solid #dcdcdc; display: flex; }
.design { width: 110px; height: 61px; margin: 11px 0 0 11px; border: 2px solid #e0e0e0; border-radius: 4px; background: #f2f2f2; padding: 0; display: flex; align-items: center; justify-content: center; gap: 4px; color: #3a3a3a; }
.rbody { margin-left: 5.500px; }
.tabs { display: flex; height: 25px; margin-left: 11px; }
.tab { padding-top: 2px; flex: none; color: #555; }
.tab.on { width: 56px; padding-left: 13px; border-bottom: 3px solid #1d94cf; color: #2696cd; }
.t1 { margin-left: 33px; } .t2 { margin-left: 46px; } .t3 { margin-left: 45px; } .t4 { margin-left: 45px; } .t5 { margin-left: 46px; }
.groups { display: flex; height: 56px; align-items: flex-end; padding-bottom: 2px; }
.group { height: 52px; border-right: 2px solid #dedede; display: flex; flex-direction: column; align-items: center; }
.g-create { width: 268px; } .g-modify { width: 269px; } .g-assemble { width: 97px; } .g-construct { width: 99px; } .g-inspect { width: 79px; } .g-insert { width: 97px; } .g-select { width: 76px; border: 0; }
.gicons { display: flex; height: 32px; }
.cell { width: 43px; height: 32px; display: flex; align-items: center; justify-content: center; }
.glabel { display: flex; align-items: center; gap: 3px; margin-top: 5px; color: #555; }
.glabel > :last-child { color: #333; }
.work { height: 487px; flex: none; position: relative; background: #fff; }
.model { position: absolute; left: 380px; top: 63px; }
.viewcube { position: absolute; left: 1195px; top: 8px; }
.side { width: 304px; padding-left: 4px; padding-top: 4px; }
.panel { width: 300px; height: 25px; background: #f1f1f1; border: 1px solid #ccc; border-width: 1px 1px 2px; display: flex; align-items: center; padding-left: 4px; }
.ptitle { margin-left: 9px; color: #777; }
.pbtn { margin-left: auto; }
.grip { width: 3px; height: 12px; border-left: 1px solid #777; border-right: 1px solid #aaa; margin-left: 7px; }
.comments { margin-top: 16px; border-top-color: #e6e6e6; }
.comments .ptitle { margin-left: 20px; }
.tree { display: flex; height: 411px; padding-top: 5px; }
.track { margin-left: 4px; width: 6px; height: 400px; background: #ccc; padding-top: 165px; border-radius: 0 0 3px 3px; }
.thumb { height: 235px; background: #999; border-radius: 3px; }
ul { list-style: none; margin: -2px 0 0 23px; padding: 0; height: 408px; }
li { height: 24px; display: flex; align-items: center; }
.pill { margin-left: 6px; height: 20px; background: #f1f1f1; display: flex; align-items: center; padding-left: 3px; }
.ci { margin-left: 10px; }
.li { margin-left: 9px; }
.rt { margin-left: 14px; color: #4a4a4a; }
.navbar { position: absolute; left: 522px; top: 457px; width: 236px; height: 24px; background: #f1f1f1; display: flex; align-items: center; padding-left: 2.500px; color: #444; }
.nv { display: flex; align-items: center; }
.n-a { width: 32px; gap: 3px; } .n-b { width: 26px; } .n-c { width: 33.500px; gap: 4px; } .n-d { width: 31px; gap: 2px; }
.timeline { height: 48px; flex: none; background: #f1f1f1; border-top: 1px solid #ccc; position: relative; display: flex; }
.hthumb { position: absolute; left: 1217px; top: 0; width: 57px; height: 6px; background: #c6c6c6; border-radius: 0 0 3px 3px; }
.playback { display: flex; gap: 10px; margin-left: 9px; align-items: center; height: 55px; width: 127px; }
.dots { width: 8px; height: 2px; margin-top: 39px; margin-right: -4px; background: repeating-linear-gradient(90deg, #ccc 0 3px, transparent 3px 5px); }
.steps { display: flex; height: 41px; border-bottom: 2px solid #c6c6c6; width: 1071px; }
.step { width: 24px; flex: none; padding: 15px 0 0 5px; position: relative; }
.tick { display: block; width: 2px; height: 5px; background: #c9c9c9; margin: 4px 0 0 8px; }
.exp { position: absolute; left: 7px; top: 35px; width: 10px; height: 10px; border-radius: 2px; background: #b9bfc5; border: 1px solid #8f959b; font-size: 11px; line-height: 8px; text-align: center; color: #111; }
.head { position: absolute; left: 1216px; top: 9px; }
.cog { position: absolute; left: 1250px; top: 19px; }
.taskbar { height: 48px; flex: none; display: flex; color: #f2f2fa; background: linear-gradient(90deg, #101b78 0, #161f60 70px, #1a1f4c 150px, #181f4e 330px, #1a1c42 480px, #241a30 560px, #35191c 595px, #2f2114 640px, #2e2213 740px, #222b13 830px, #163312 895px, #18224e 925px, #17178a 960px, #171a92 1080px, #191a70 1130px, #1d1c30 1170px, #1b1a24 1280px); }
.apps { margin-left: 398px; display: flex; height: 48px; }
.app { width: 44px; height: 50px; display: grid; place-items: center; position: relative; }
.app.active { width: 40px; height: 40px; margin: 5px 0 0 1px; border-radius: 4px; background: rgba(255, 255, 255, .12); }
.run { position: absolute; bottom: 6px; left: 19px; width: 6px; height: 3px; border-radius: 2px; background: #a9a9a9; }
.active .run { left: 12px; width: 16px; bottom: 1px; background: #4cc0f0; }
.badge { position: absolute; left: 24px; top: 8px; width: 16px; height: 16px; border-radius: 50%; background: #e5201f; color: #fff; font: 11px/16px "Open Sans", sans-serif; text-align: center; letter-spacing: -.3px; }
.badge.h { background: #9a41b5; font-size: 10px; }
.tray { margin-left: auto; display: flex; align-items: center; padding-right: 18px; }
.lang { width: 26px; display: flex; flex-direction: column; align-items: center; margin-left: 16px; }
.lang > * + *, .clock > * + * { margin-top: -2px; }
.sys { display: flex; gap: 8px; margin-left: 16px; align-items: center; }
.clock { display: flex; flex-direction: column; align-items: flex-end; width: 64px; margin-left: 12px; }
.count { width: 19px; height: 19px; border-radius: 50%; background: #4cc2f1; color: #17304a; font: 11px/19px "Open Sans", sans-serif; text-align: center; margin-left: 6px; }
</style>
